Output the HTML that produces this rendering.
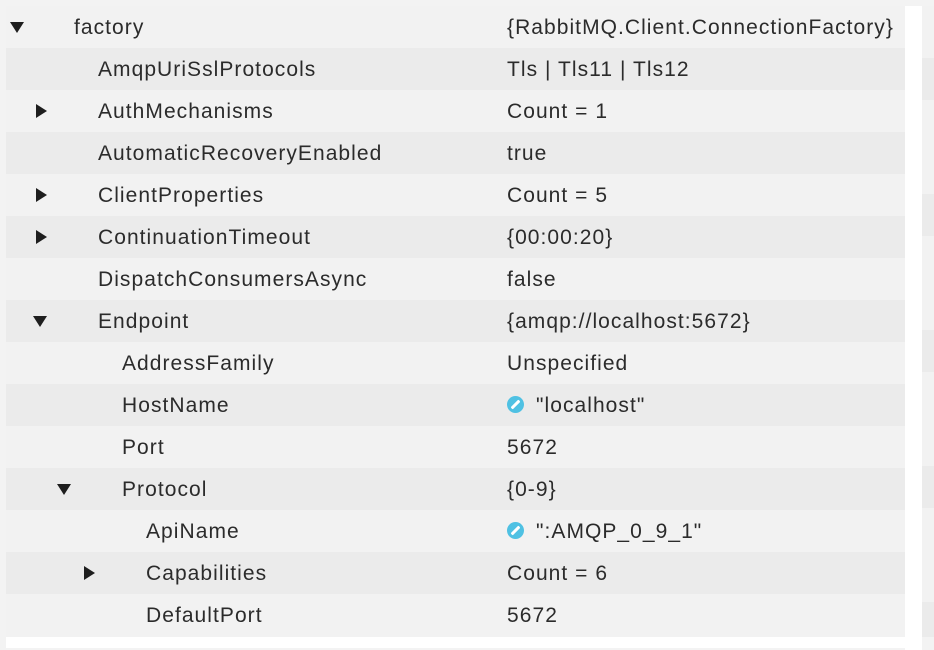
<!DOCTYPE html>
<html><head><meta charset="utf-8"><style>
body{margin:0;width:934px;height:650px;background:#f3f3f3;position:relative;overflow:hidden;font-family:"Liberation Sans",sans-serif;color:#2b2b2b;font-size:21px;letter-spacing:1.05px}
.gapr{position:absolute;left:905px;top:6px;width:17px;height:644px;background:#fff}
.gapb{position:absolute;left:6px;top:637px;width:916px;height:11px;background:#fff}
.strip{position:absolute;left:922px;top:6px;width:12px;height:631px}
.row{position:absolute;left:6px;width:899px;height:42px;line-height:44px;background:#f2f2f2}
.row.d{background:#ebebeb}
.n{position:absolute;top:0}
.v{position:absolute;left:501px;top:0}
.t{position:absolute;top:15px;width:0;height:0}
.down{border-left:7px solid transparent;border-right:7px solid transparent;border-top:11px solid #1e1e1e}
.right{border-top:7px solid transparent;border-bottom:7px solid transparent;border-left:11px solid #1e1e1e;top:14px}
.ic{display:inline-block;width:17px;height:17px;border-radius:50%;background:#4fc1e3;vertical-align:-1px;margin-right:12px;position:relative}
.ic:after{content:"";position:absolute;left:7px;top:3px;width:3px;height:11px;background:#fff;transform:rotate(45deg);border-radius:1px}
</style></head><body>
<div class="gapr"></div><div class="gapb"></div>
<div class="strip" style="background:repeating-linear-gradient(#f2f2f2 0 52px,#ebebeb 52px 94px,#f2f2f2 94px 136px)"></div>
<div class="row" style="top:6px"><div class="t down" style="left:4px;top:16px"></div><div class="n" style="left:68px">factory</div><div class="v">{RabbitMQ.Client.ConnectionFactory}</div></div>
<div class="row d" style="top:48px"><div class="n" style="left:92px">AmqpUriSslProtocols</div><div class="v">Tls | Tls11 | Tls12</div></div>
<div class="row" style="top:90px"><div class="t right" style="left:30px"></div><div class="n" style="left:92px">AuthMechanisms</div><div class="v">Count = 1</div></div>
<div class="row d" style="top:132px"><div class="n" style="left:92px">AutomaticRecoveryEnabled</div><div class="v">true</div></div>
<div class="row" style="top:174px"><div class="t right" style="left:30px"></div><div class="n" style="left:92px">ClientProperties</div><div class="v">Count = 5</div></div>
<div class="row d" style="top:216px"><div class="t right" style="left:30px"></div><div class="n" style="left:92px">ContinuationTimeout</div><div class="v">{00:00:20}</div></div>
<div class="row" style="top:258px"><div class="n" style="left:92px">DispatchConsumersAsync</div><div class="v">false</div></div>
<div class="row d" style="top:300px"><div class="t down" style="left:27px;top:16px"></div><div class="n" style="left:92px">Endpoint</div><div class="v">{amqp://localhost:5672}</div></div>
<div class="row" style="top:342px"><div class="n" style="left:116px">AddressFamily</div><div class="v">Unspecified</div></div>
<div class="row d" style="top:384px"><div class="n" style="left:116px">HostName</div><div class="v"><span class="ic"></span>"localhost"</div></div>
<div class="row" style="top:426px"><div class="n" style="left:116px">Port</div><div class="v">5672</div></div>
<div class="row d" style="top:468px"><div class="t down" style="left:51px;top:16px"></div><div class="n" style="left:116px">Protocol</div><div class="v">{0-9}</div></div>
<div class="row" style="top:510px"><div class="n" style="left:140px">ApiName</div><div class="v"><span class="ic"></span>":AMQP_0_9_1"</div></div>
<div class="row d" style="top:552px"><div class="t right" style="left:78px"></div><div class="n" style="left:140px">Capabilities</div><div class="v">Count = 6</div></div>
<div class="row" style="top:594px;height:43px"><div class="n" style="left:140px">DefaultPort</div><div class="v">5672</div></div>
</body></html>
